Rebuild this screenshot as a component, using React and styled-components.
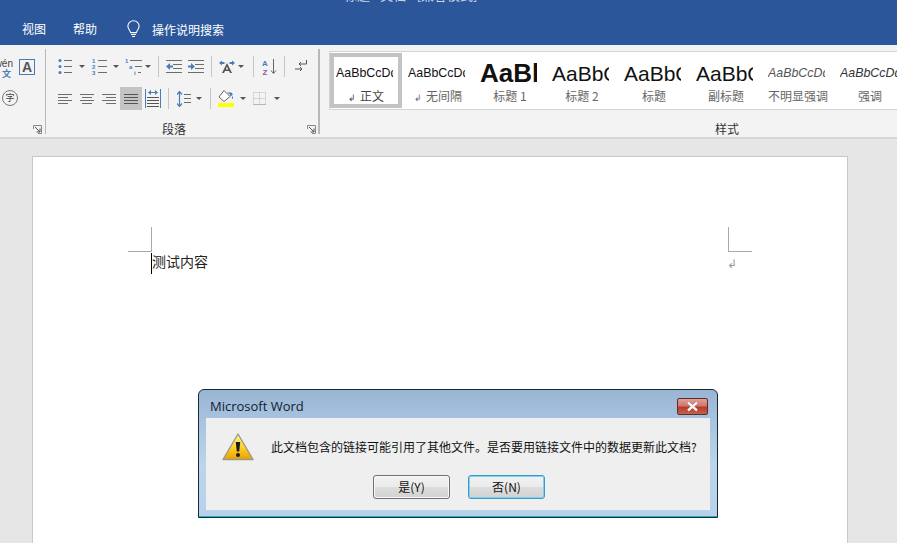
import React from "react";
import styled, { createGlobalStyle } from "styled-components";

const GlobalStyle = createGlobalStyle`
  html, body { margin: 0; padding: 0; height: 100%; overflow: hidden; background: #e6e6e6; }
  body { font-family: "Noto Sans CJK SC", "Liberation Sans", sans-serif; }
`;

const UI_FONT = `"Noto Sans CJK SC", "Liberation Sans", sans-serif`;
const BLUE = "#4a7db5";
const GREY = "#6d6d6d";

const Window = styled.div`
  position: relative;
  width: 897px;
  height: 543px;
  overflow: hidden;
  display: flex;
  flex-direction: column;
  background: #e6e6e6;
`;

const TitleBar = styled.div`
  height: 45px;
  flex: none;
  background: #2b579a;
  color: #fff;
  position: relative;
  overflow: hidden;
  font: 12px ${UI_FONT};
  display: flex;
  align-items: flex-end;
`;

const CutTitle = styled.div`
  position: absolute;
  left: 344px;
  top: -15px;
  color: #c9d6e8;
  font-size: 13px;
  white-space: nowrap;
`;

const Tabs = styled.div`
  display: flex;
  align-items: center;
  height: 32px;
  padding-left: 22px;
`;

const Tab = styled.span`
  margin-right: 27px;
  line-height: 32px;
`;

const SearchTab = styled.span`
  display: flex;
  align-items: center;
  margin-left: 3px;
  svg { margin-right: 12px; }
`;

const Ribbon = styled.div`
  height: 94px;
  flex: none;
  box-sizing: border-box;
  background: #f3f3f3;
  border-bottom: 2px solid #d6d6d6;
  display: flex;
  overflow: hidden;
`;

const FontStub = styled.div`
  width: 45px;
  flex: none;
  position: relative;
  overflow: hidden;
  border-right: 1px solid #b9b9b9;
  margin: 4px 0 3px;
  font-family: ${UI_FONT};
`;

const Pinyin = styled.div`
  position: absolute;
  right: 32px;
  top: 10px;
  text-align: right;
  font: 10px/10px "Liberation Sans", sans-serif;
  color: #444;
  white-space: nowrap;
  span { display: block; color: ${BLUE}; font: bold 9px/9px ${UI_FONT}; padding-right: 2px; }
`;

const BoxedA = styled.div`
  position: absolute;
  left: 19px;
  top: 10px;
  width: 14px;
  height: 14px;
  border: 1px solid ${BLUE};
  font: bold 14px/15px "Liberation Sans", sans-serif;
  color: #555;
  text-align: center;
`;

const CircleChar = styled.div`
  position: absolute;
  left: 2px;
  top: 41px;
  width: 14px;
  height: 14px;
  border: 1px solid #777;
  border-radius: 50%;
  font: 9px/14px ${UI_FONT};
  color: #444;
  text-align: center;
`;

const Launcher = styled.svg`
  position: absolute;
  right: ${(p) => p.$right}px;
  bottom: 0;
  width: 9px;
  height: 9px;
`;

const Paragraph = styled.div`
  width: 274px;
  flex: none;
  box-sizing: border-box;
  position: relative;
  margin: 4px 0 3px;
  border-right: 2px solid #b9b9b9;
  display: flex;
  flex-direction: column;
  padding: 6px 0 0 12px;
`;

const ToolRow = styled.div`
  display: flex;
  align-items: center;
  height: 23px;
  margin-bottom: ${(p) => p.$gap || 0}px;
`;

const Tool = styled.div`
  flex: none;
  width: ${(p) => p.$w}px;
  height: 23px;
  margin-left: ${(p) => p.$ml || 0}px;
  display: flex;
  align-items: center;
  justify-content: center;
  background: ${(p) => (p.$on ? "#c4c4c4" : "transparent")};
`;

const Caret = styled.div`
  flex: none;
  width: 0;
  height: 0;
  margin-left: ${(p) => p.$ml || 0}px;
  border-left: 3px solid transparent;
  border-right: 3px solid transparent;
  border-top: 3px solid #555;
`;

const ToolSep = styled.div`
  flex: none;
  width: 1px;
  height: 21px;
  background: #c6c6c6;
  margin-left: ${(p) => p.$ml || 0}px;
`;

const GroupLabel = styled.div`
  font: 12px/14px ${UI_FONT};
  color: #333;
  text-align: center;
  position: absolute;
  left: ${(p) => p.$x}px;
  top: ${(p) => p.$y}px;
  white-space: nowrap;
`;

const Styles = styled.div`
  flex: 1;
  min-width: 0;
  position: relative;
  padding: 6px 0 0 9px;
`;

const Gallery = styled.div`
  display: flex;
  height: 59px;
  box-sizing: border-box;
  padding: 1px 0 1px 0;
  background: #fff;
  border: 1px solid #d4d4d4;
  border-right: 0;
`;

const StyleCard = styled.div`
  flex: none;
  width: 72px;
  height: 55px;
  box-sizing: border-box;
  border: 4px solid ${(p) => (p.$on ? "#c3c3c3" : "transparent")};
  display: flex;
  flex-direction: column;
  align-items: center;
`;

const Preview = styled.div`
  align-self: flex-start;
  margin-left: 2px;
  width: 57px;
  height: 27px;
  overflow: hidden;
  white-space: nowrap;
  line-height: 27px;
  margin-top: 3px;
  color: ${(p) => p.$color || "#111"};
  font-family: "Liberation Sans", sans-serif;
  font-size: ${(p) => p.$size}px;
  font-weight: ${(p) => (p.$bold ? 700 : 400)};
  font-style: ${(p) => (p.$italic ? "italic" : "normal")};
`;

const StyleName = styled.div`
  font: 12px/16px ${UI_FONT};
  color: ${(p) => (p.$on ? "#444" : "#666")};
  margin-top: 2px;
  white-space: nowrap;
  i { font: 9px/10px "Liberation Sans", sans-serif; margin-right: 4px; }
`;

const Workspace = styled.div`
  flex: 1;
  padding: 17px 49px 0 32px;
`;

const Page = styled.div`
  height: 420px;
  background: #fff;
  border: 1px solid #c8c8c8;
  position: relative;
  padding: 95px 95px 0 95px;
`;

const PageInner = styled.div`
  display: flex;
  justify-content: space-between;
  position: relative;
  padding: 0 0 0 23px;
`;

const CornerMark = styled.div`
  position: absolute;
  top: -25px;
  width: 23px;
  height: 24px;
  ${(p) => (p.$right ? "right: 0;" : "left: 0;")}
  ${(p) => (p.$right ? "border-left" : "border-right")}: 1px solid #aaa;
  border-bottom: 1px solid #aaa;
`;

const BodyText = styled.div`
  font: 14px/16px ${UI_FONT};
  color: #222;
  margin-top: 1px;
  border-left: 1px solid #000;
`;

const ParaMark = styled.span`
  font: 12px/20px "Liberation Sans", sans-serif;
  color: #999;
  margin-right: 15px;
  margin-top: 2px;
`;

const Dialog = styled.div`
  position: absolute;
  left: 198px;
  top: 389px;
  width: 520px;
  height: 129px;
  box-sizing: border-box;
  border: 1px solid #1a2a33;
  border-radius: 6px 6px 0 0;
  padding: 0 7px 7px;
  background: linear-gradient(180deg, #99b5d4 0%, #a9c4e0 25%, #bcd4ec 60%, #b7d2ec 100%);
  box-shadow: inset 0 -1px 0 #15b6cd;
  display: flex;
  flex-direction: column;
`;

const DialogHead = styled.div`
  height: 28px;
  flex: none;
  box-sizing: border-box;
  padding: 4px 2px 0 4px;
  display: flex;
  align-items: center;
  justify-content: space-between;
  font: 13px "Open Sans", "Liberation Sans", sans-serif;
  color: #10202f;
`;

const CloseBtn = styled.div`
  width: 29px;
  height: 15px;
  border: 1px solid #5c2e2a;
  border-radius: 2px;
  background: linear-gradient(180deg, #e0a198 0%, #d0786b 45%, #b83c2c 55%, #c4604f 100%);
  display: flex;
  align-items: center;
  justify-content: center;
`;

const DialogBody = styled.div`
  flex: 1;
  background: #efefef;
  padding: 0 13px 0 16px;
  display: flex;
  flex-direction: column;
`;

const Message = styled.div`
  display: flex;
  align-items: center;
  height: 57px;
  font: 12px ${UI_FONT};
  color: #111;
  white-space: nowrap;
  svg { margin-right: 17px; flex: none; }
`;

const Buttons = styled.div`
  display: flex;
  justify-content: center;
  gap: 18px;
  padding-right: 1px;
`;

const DlgButton = styled.div`
  width: 77px;
  height: 24px;
  box-sizing: border-box;
  border: 1px solid ${(p) => (p.$focus ? "#3a9bc8" : "#707070")};
  border-radius: 3px;
  background: linear-gradient(180deg, #f2f2f2 0%, #ebebeb 48%, #dddddd 52%, #d2d2d2 100%);
  box-shadow: inset 0 0 0 1px ${(p) => (p.$focus ? "#7fd0ee" : "#f8f8f8")};
  font: 12px/22px ${UI_FONT};
  color: #111;
  text-align: center;
`;

// 리스트 아이콘류: 가로줄 + 파란 불릿
const Lines = ({ w = 14, rows, color = GREY, h = 14 }) => (
  <svg width={w} height={h} viewBox={`0 0 ${w} ${h}`}>
    {rows.map(([x1, x2, y], i) => (
      <rect key={i} x={x1} y={y} width={x2 - x1} height="1" fill={color} />
    ))}
  </svg>
);

const Bullets = () => (
  <svg width="14" height="15" viewBox="0 0 14 15">
    {[1.5, 7.5, 13.5].map((y) => (
      <g key={y}>
        <circle cx="2" cy={y} r="1.5" fill={BLUE} />
        <rect x="6" y={y - 0.5} width="8" height="1" fill={GREY} />
      </g>
    ))}
  </svg>
);

const Numbers = () => (
  <svg width="15" height="16" viewBox="0 0 15 16">
    {[[1, 4], [2, 10], [3, 16]].map(([n, y]) => (
      <g key={n}>
        <text x="0" y={y} fontSize="6" fontWeight="700" fill={BLUE} fontFamily="Liberation Sans">{n}</text>
        <rect x="6" y={y - 3} width="9" height="1" fill={GREY} />
      </g>
    ))}
  </svg>
);

const MultiLevel = () => (
  <svg width="17" height="16" viewBox="0 0 17 16">
    <text x="0" y="4" fontSize="6" fontWeight="700" fill={BLUE} fontFamily="Liberation Sans">1</text>
    <rect x="5" y="1" width="12" height="1" fill={GREY} />
    <text x="4" y="10" fontSize="6" fontWeight="700" fill={BLUE} fontFamily="Liberation Sans">a</text>
    <rect x="10" y="7" width="7" height="1" fill={GREY} />
    <text x="9" y="16" fontSize="6" fontWeight="700" fill={BLUE} fontFamily="Liberation Sans">i</text>
    <rect x="13" y="13" width="3" height="1" fill={GREY} />
  </svg>
);

const IndentIcon = ({ flip }) => (
  <svg width="16" height="13" viewBox="0 0 16 13">
    <rect x="0" y="0" width="16" height="1" fill={GREY} />
    <rect x="7" y="4" width="9" height="1" fill={GREY} />
    <rect x="7" y="8" width="9" height="1" fill={GREY} />
    <rect x="0" y="12" width="16" height="1" fill={GREY} />
    {flip ? (
      <path d="M0 5.5H3V3L7 6.5L3 10V7.5H0Z" fill={BLUE} />
    ) : (
      <path d="M7 5.5H4V3L0 6.5L4 10V7.5H7Z" fill={BLUE} />
    )}
  </svg>
);

const ChangeCase = () => (
  <svg width="16" height="13" viewBox="0 0 16 13">
    <path d="M0 3L3 0.5V2H5.5V4H3V5.5Z M16 3L13 0.5V2H10.5V4H13V5.5Z" fill={BLUE} />
    <path d="M8 3L3 13H5L6 11H10L11 13H13Z M6.8 9.5L8 6.5L9.2 9.5Z" fill="#555" fillRule="evenodd" />
  </svg>
);

const SortIcon = () => (
  <svg width="15" height="16" viewBox="0 0 15 16">
    <text x="0" y="7" fontSize="8" fontWeight="700" fill={BLUE} fontFamily="Liberation Sans">A</text>
    <text x="0.5" y="15.5" fontSize="8" fontWeight="700" fill="#8a5aa8" fontFamily="Liberation Sans">Z</text>
    <path d="M11.5 0V14M9 11.5L11.5 14.5L14 11.5" stroke="#666" fill="none" />
  </svg>
);

const ShowMarks = () => (
  <svg width="12" height="13" viewBox="0 0 12 13">
    <path d="M11.5 0V4H4M6 2L4 4L6 6" stroke="#555" fill="none" />
    <path d="M0 9H7M5 7L7 9L5 11" stroke="#555" fill="none" />
  </svg>
);

const Distribute = () => (
  <svg width="16" height="19" viewBox="0 0 16 19">
    <rect x="0" y="0" width="1" height="19" fill={BLUE} />
    <rect x="15" y="0" width="1" height="19" fill={BLUE} />
    <path d="M3 3.5L6 1V3H10V1L13 3.5L10 6V4H6V6Z" fill={BLUE} />
    {[8, 11, 14, 17].map((y) => (
      <rect key={y} x="2" y={y} width="12" height="1" fill="#555" />
    ))}
  </svg>
);

const LineSpacing = () => (
  <svg width="14" height="16" viewBox="0 0 14 16">
    <path d="M2.5 1V15M0 3.5L2.5 0.5L5 3.5M0 12.5L2.5 15.5L5 12.5" stroke={BLUE} strokeWidth="1.2" fill="none" />
    {[3, 7, 11].map((y) => (
      <rect key={y} x="7" y={y} width="7" height="1" fill={GREY} />
    ))}
  </svg>
);

const Shading = () => (
  <svg width="16" height="17" viewBox="0 0 16 17">
    <path d="M6 0.5L1 7L6 11.5L12 6.5Z" fill="#fff" stroke="#666" />
    <path d="M12 6C14 6 15.5 5 14 3C12.5 2 10 2 9 3C12 3.5 12.5 4.5 12 6Z M14.5 6C15.5 7.5 15 9 14 9C13.5 8 14 7 14.5 6Z" fill={BLUE} />
    <rect x="0" y="13" width="16" height="4" fill="#ffff00" />
  </svg>
);

const BorderGrid = () => (
  <svg width="13" height="13" viewBox="0 0 13 13">
    <path d="M0.5 0.5H12.5M0.5 0.5V12.5M12.5 0.5V12.5M6.5 0.5V12.5M0.5 6.5H12.5" stroke="#c8acc8" strokeDasharray="1 1" fill="none" />
    <rect x="0" y="12" width="13" height="1" fill="#b5b5b5" />
  </svg>
);

const Bulb = () => (
  <svg width="13" height="18" viewBox="0 0 13 18">
    <path
      d="M6.5 0.8C3.2 0.8 0.9 3.2 0.9 6.2C0.9 9 3 9.9 3.6 12.6H9.4C10 9.9 12.1 9 12.1 6.2C12.1 3.2 9.8 0.8 6.5 0.8Z"
      stroke="#fff"
      fill="none"
      strokeWidth="1.1"
    />
    <path d="M4 14.5H9M5 16.5H8" stroke="#fff" strokeWidth="1.1" />
  </svg>
);

const LauncherIcon = ({ right }) => (
  <Launcher $right={right} viewBox="0 0 9 9">
    <path d="M0.5 4V0.5H8.5V8.5H5" stroke="#888" fill="none" />
    <path d="M2 2L7 7M7 3.5V7H3.5" stroke="#555" fill="none" />
  </Launcher>
);

const Warning = () => (
  <svg width="32" height="28" viewBox="0 0 32 28">
    <defs>
      <linearGradient id="warn" x1="0" y1="0" x2="0" y2="1">
        <stop offset="0" stopColor="#fff3a0" />
        <stop offset="0.5" stopColor="#fdd32a" />
        <stop offset="1" stopColor="#eaa000" />
      </linearGradient>
    </defs>
    <path d="M16 1L31 26.5H1Z" fill="url(#warn)" stroke="#9a9a8c" strokeWidth="1.4" strokeLinejoin="round" />
    <path d="M13.8 9H18.2L17.2 18.5H14.8Z" fill="#1a1a1a" />
    <circle cx="16" cy="22" r="2" fill="#1a1a1a" />
  </svg>
);

const CloseX = () => (
  <svg width="15" height="11" viewBox="0 0 15 11">
    <path d="M3 1.5L12 9.5M12 1.5L3 9.5" stroke="#5a3a38" strokeWidth="3.6" strokeOpacity="0.45" />
    <path d="M3 1.5L12 9.5M12 1.5L3 9.5" stroke="#f4f4f4" strokeWidth="2.4" />
  </svg>
);

const STYLE_CARDS = [
  { name: "正文", text: "AaBbCcDd", size: 12.4, mark: true, on: true },
  { name: "无间隔", text: "AaBbCcDd", size: 12.4, mark: true },
  { name: "标题 1", text: "AaBb", size: 26, bold: true },
  { name: "标题 2", text: "AaBbC", size: 21 },
  { name: "标题", text: "AaBbC", size: 21 },
  { name: "副标题", text: "AaBbC", size: 21 },
  { name: "不明显强调", text: "AaBbCcDd", size: 12.4, italic: true, color: "#555" },
  { name: "强调", text: "AaBbCcDd", size: 12.4, italic: true, color: "#333" },
];

const App = () => {
  return (
    <Window>
      <GlobalStyle />
      <TitleBar>
        <CutTitle>标题 - 文档 - [兼容模式]</CutTitle>
        <Tabs>
          <Tab>视图</Tab>
          <Tab>帮助</Tab>
          <SearchTab>
            <Bulb />
            操作说明搜索
          </SearchTab>
        </Tabs>
      </TitleBar>

      <Ribbon>
        <FontStub>
          <Pinyin>
            wén
            <span>文</span>
          </Pinyin>
          <BoxedA>A</BoxedA>
          <CircleChar>字</CircleChar>
          <LauncherIcon right={3} />
        </FontStub>

        <Paragraph>
          <ToolRow $gap={9}>
            <Tool $w={14}><Bullets /></Tool>
            <Caret $ml={7} />
            <Tool $w={15} $ml={7}><Numbers /></Tool>
            <Caret $ml={6} />
            <Tool $w={17} $ml={6}><MultiLevel /></Tool>
            <Caret $ml={3} />
            <ToolSep $ml={7} />
            <Tool $w={16} $ml={7}><IndentIcon /></Tool>
            <Tool $w={16} $ml={6}><IndentIcon flip /></Tool>
            <ToolSep $ml={7} />
            <Tool $w={16} $ml={7}><ChangeCase /></Tool>
            <Caret $ml={3} />
            <ToolSep $ml={9} />
            <Tool $w={15} $ml={8}><SortIcon /></Tool>
            <ToolSep $ml={7} />
            <Tool $w={12} $ml={10}><ShowMarks /></Tool>
          </ToolRow>
          <ToolRow>
            <Tool $w={14}><Lines rows={[[0, 14, 1], [0, 10, 4], [0, 14, 7], [0, 10, 10]]} h={12} /></Tool>
            <Tool $w={14} $ml={8}><Lines rows={[[0, 14, 1], [2, 12, 4], [0, 14, 7], [2, 12, 10]]} h={12} /></Tool>
            <Tool $w={14} $ml={8}><Lines rows={[[0, 14, 1], [4, 14, 4], [0, 14, 7], [4, 14, 10]]} h={12} /></Tool>
            <Tool $w={22} $ml={4} $on><Lines rows={[[0, 14, 1], [0, 14, 4], [0, 14, 7], [0, 14, 10]]} h={12} color="#555" /></Tool>
            <Tool $w={16} $ml={3}><Distribute /></Tool>
            <ToolSep $ml={7} />
            <Tool $w={14} $ml={8}><LineSpacing /></Tool>
            <Caret $ml={5} />
            <ToolSep $ml={8} />
            <Tool $w={16} $ml={7}><Shading /></Tool>
            <Caret $ml={6} />
            <Tool $w={13} $ml={7}><BorderGrid /></Tool>
            <Caret $ml={8} />
          </ToolRow>
          <GroupLabel $x={116} $y={73}>段落</GroupLabel>
          <LauncherIcon right={2} />
        </Paragraph>

        <Styles>
          <Gallery>
            {STYLE_CARDS.map((card) => (
              <StyleCard key={card.name} $on={card.on}>
                <Preview $size={card.size} $bold={card.bold} $italic={card.italic} $color={card.color}>
                  {card.text}
                </Preview>
                <StyleName $on={card.on}>
                  {card.mark && <i>↲</i>}
                  {card.name}
                </StyleName>
              </StyleCard>
            ))}
          </Gallery>
          <GroupLabel $x={395} $y={77}>样式</GroupLabel>
        </Styles>
      </Ribbon>

      <Workspace>
        <Page>
          <PageInner>
            <CornerMark />
            <CornerMark $right />
            <BodyText>测试内容</BodyText>
            <ParaMark>↲</ParaMark>
          </PageInner>
        </Page>
      </Workspace>

      <Dialog>
        <DialogHead>
          <span>Microsoft Word</span>
          <CloseBtn><CloseX /></CloseBtn>
        </DialogHead>
        <DialogBody>
          <Message>
            <Warning />
            此文档包含的链接可能引用了其他文件。是否要用链接文件中的数据更新此文档?
          </Message>
          <Buttons>
            <DlgButton>是(Y)</DlgButton>
            <DlgButton $focus>否(N)</DlgButton>
          </Buttons>
        </DialogBody>
      </Dialog>
    </Window>
  );
};

export default App;
